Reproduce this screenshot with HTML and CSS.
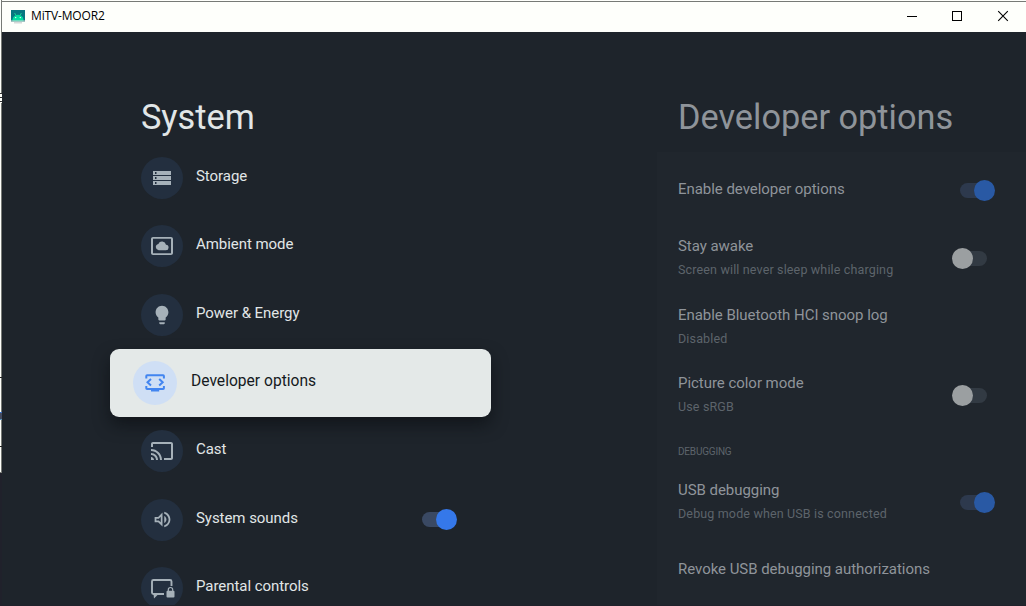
FILE: index.html
```html
<!DOCTYPE html>
<html lang="en">
  <head>
    <meta charset="UTF-8" />
    <meta name="viewport" content="width=device-width, initial-scale=1.0" />
    <title>MiTV-MOOR2</title>
    <link rel="stylesheet" href="styles.css">
  </head>
  <body>
    <div class="edge">
      <span class="edge-mark menu"></span>
      <span class="edge-mark line-a"></span>
      <span class="edge-mark dot"></span>
      <span class="edge-mark line-b"></span>
    </div>
    <div class="window">
      <header class="titlebar">
        <svg class="app-icon" width="14" height="14" viewBox="0 0 14 14">
          <rect x="0" y="0" width="14" height="12" fill="#087681"/>
          <path d="M3.600 3 5 5.500M10.400 3 9 5.500" stroke="#20d894" stroke-width=".9"/>
          <path d="M1.500 11.500V9.500C2.500 3.300 11.500 3.300 12.500 9.500v2z" fill="#04dca0"/>
          <circle cx="4.700" cy="7.600" r=".7" fill="#fff"/>
          <circle cx="9.300" cy="7.600" r=".7" fill="#fff"/>
          <path d="M0 10.500h14v1.200H0zM3 12h8v1.600H3z" fill="#d6d8d8"/>
        </svg>
        <span class="app-name">MiTV-MOOR2</span>
        <div class="window-buttons">
          <svg width="46" height="30" viewBox="0 0 46 30"><path d="M18 14.5h10" stroke="#000"/></svg>
          <svg width="46" height="30" viewBox="0 0 46 30"><rect x="17.5" y="9.5" width="9" height="9" fill="none" stroke="#000"/></svg>
          <svg width="46" height="30" viewBox="0 0 46 30"><path d="M17.2 9.2l9.6 9.6M26.8 9.2l-9.6 9.6" stroke="#000" stroke-width="1.1"/></svg>
        </div>
      </header>

      <main class="screen">
        <section class="system">
          <h1>System</h1>
          <ul class="menu-list">
            <li class="item">
              <span class="icon">
                <svg width="24" height="24" viewBox="0 0 24 24"><path fill-rule="evenodd" d="M3 19h18v-4H3v4zm2-3h1.500v2H5v-2zM3 5v4h18V5H3zm3.500 3H5V6h1.500v2zM3 14h18v-4H3v4zm2-3h1.500v2H5v-2z"/></svg>
              </span>
              <span class="label">Storage</span>
            </li>
            <li class="item">
              <span class="icon">
                <svg width="24" height="24" viewBox="0 0 24 24"><path d="M21 3H3c-1.100 0-2 .9-2 2v14c0 1.100.9 2 2 2h18c1.100 0 2-.9 2-2V5c0-1.100-.9-2-2-2zm0 16.200H3V4.800h18v14.400zM8.700 16.200h7a2.700 2.700 0 0 0 .3-5.400A4.100 4.100 0 0 0 8.300 9.900 3.200 3.200 0 0 0 8.700 16.200z"/></svg>
              </span>
              <span class="label">Ambient mode</span>
            </li>
            <li class="item">
              <span class="icon">
                <svg width="22" height="22" viewBox="0 0 24 24"><path d="M9 21c0 .55.45 1 1 1h4c.55 0 1-.45 1-1v-1H9v1zm3-19C8.140 2 5 5.140 5 9c0 2.380 1.190 4.470 3 5.740V17c0 .55.45 1 1 1h6c.55 0 1-.45 1-1v-2.260c1.810-1.270 3-3.360 3-5.740 0-3.860-3.140-7-7-7z"/></svg>
              </span>
              <span class="label">Power &amp; Energy</span>
            </li>
            <li class="item selected">
              <span class="icon">
                <svg width="24" height="24" viewBox="0 0 24 24" fill="none" stroke="currentColor" stroke-width="2">
                  <path d="M3.300 7.500V5q0-.8.8-.8h16q.8 0 .8.800v2.500M3.300 15v2.200q0 .8.800.8h16q.8 0 .8-.8V15M8 8 4.500 11.300 8 14.600M16.200 8l3.500 3.300-3.500 3.300M8 19.400h8.200"/>
                </svg>
              </span>
              <span class="label">Developer options</span>
            </li>
            <li class="item">
              <span class="icon">
                <svg width="24" height="24" viewBox="0 0 24 24"><path d="M21 3H3c-1.100 0-2 .9-2 2v3h2V5h18v14h-7v2h7c1.100 0 2-.9 2-2V5c0-1.100-.9-2-2-2zM1 18v3h3c0-1.660-1.340-3-3-3zm0-4v2c2.760 0 5 2.240 5 5h2c0-3.870-3.130-7-7-7zm0-4v2c4.970 0 9 4.030 9 9h2c0-6.080-4.930-11-11-11z"/></svg>
              </span>
              <span class="label">Cast</span>
            </li>
            <li class="item">
              <span class="icon">
                <svg width="21" height="21" viewBox="0 0 24 24"><path d="M3 9v6h4l5 5V4L7 9H3zm7-.17v6.340L7.830 13H5v-2h2.830L10 8.830zM16.500 12c0-1.770-1.020-3.290-2.500-4.030v8.050c1.480-.73 2.500-2.250 2.500-4.020zM14 3.230v2.060c2.890.86 5 3.540 5 6.710s-2.110 5.850-5 6.710v2.060c4.010-.91 7-4.490 7-8.770s-2.990-7.860-7-8.770z"/></svg>
              </span>
              <span class="label">System sounds</span>
              <span class="switch on"></span>
            </li>
            <li class="item">
              <span class="icon">
                <svg width="26" height="24" viewBox="0 0 26 24">
                  <path d="M22.500 10V5.500q0-1.500-1.500-1.500H4.500Q3 4 3 5.500v11q0 1.500 1.500 1.500H15" fill="none" stroke="currentColor" stroke-width="1.900"/>
                  <path d="M4.500 18h5L5 22.500z"/>
                  <path d="M19.300 15v-1.300a2.200 2.200 0 0 1 4.400 0V15" fill="none" stroke="currentColor" stroke-width="1.200"/>
                  <rect x="17.500" y="14.700" width="8" height="6.800" rx="1"/>
                </svg>
              </span>
              <span class="label">Parental controls</span>
            </li>
          </ul>
        </section>

        <section class="developer">
          <h1>Developer options</h1>
          <ul class="option-list">
            <li class="option">
              <div class="text"><p class="title">Enable developer options</p></div>
              <span class="switch on"></span>
            </li>
            <li class="option">
              <div class="text">
                <p class="title">Stay awake</p>
                <p class="summary">Screen will never sleep while charging</p>
              </div>
              <span class="switch"></span>
            </li>
            <li class="option">
              <div class="text">
                <p class="title">Enable Bluetooth HCI snoop log</p>
                <p class="summary">Disabled</p>
              </div>
            </li>
            <li class="option">
              <div class="text">
                <p class="title">Picture color mode</p>
                <p class="summary">Use sRGB</p>
              </div>
              <span class="switch"></span>
            </li>
            <li class="category">DEBUGGING</li>
            <li class="option">
              <div class="text">
                <p class="title">USB debugging</p>
                <p class="summary">Debug mode when USB is connected</p>
              </div>
              <span class="switch on"></span>
            </li>
            <li class="option">
              <div class="text"><p class="title">Revoke USB debugging authorizations</p></div>
            </li>
          </ul>
        </section>
      </main>
    </div>
  </body>
</html>
```
FILE: styles.css
```css
:root {
  --screen: #1e242b;
  --panel: #20262d;
  --text: #e1e6e7;
  --text-dim: #8f949a;
  --text-faint: #5d646b;
  --icon: #a6b1b9;
  --icon-bg: #232f3f;
  --accent: #3578ea;
}

* {
  margin: 0;
  padding: 0;
  box-sizing: border-box;
}

body {
  display: flex;
  height: 606px;
  overflow: hidden;
  background: #20212b;
  font-family: Roboto, sans-serif;
}

ul {
  list-style: none;
}

/* sliver of the desktop left of the window */
.edge {
  position: relative;
  width: 2px;
  height: 473px;
  background: #fefffb;
  border-right: 1px solid #777a76;
  border-bottom: 1px solid #777a76;
}

.edge-mark {
  position: absolute;
  left: 0;
  width: 2px;
  height: 1px;
  background: #222;
}

.menu {
  top: 93px;
  height: 10px;
  background: repeating-linear-gradient(#333 0 1px, #fefffb 1px 4px);
}

.line-a {
  top: 377px;
}

.dot {
  top: 412px;
  height: 8px;
  background: #444b60;
  border-top: 1px solid #3970c5;
  border-bottom: 1px solid #5b94b8;
}

.line-b {
  top: 446px;
}

.window {
  width: 1024px;
  height: 605px;
  display: flex;
  flex-direction: column;
}

.titlebar {
  height: 32px;
  flex: none;
  display: flex;
  align-items: center;
  background: linear-gradient(#fefffb 1px, #777a76 1px 2px, #fefffb 2px);
  padding: 1px 0 0 9px;
}

.app-name {
  margin-left: 6px;
  padding-bottom: 2px;
  font: 12px "Open Sans", sans-serif;
  letter-spacing: -0.15px;
  color: #000;
}

.window-buttons {
  display: flex;
  margin: 0 -1px 0 auto;
}

.window-buttons svg {
  display: block;
}

.screen {
  flex: 1;
  display: flex;
  min-height: 0;
  overflow: hidden;
  background: var(--screen);
}

.system {
  width: 655px;
  flex: none;
  padding: 64px 0 0 108px;
}

h1 {
  height: 48px;
  line-height: 42px;
  font-size: 34.3px;
  font-weight: 400;
}

.system h1 {
  padding-left: 31px;
  color: var(--text);
}

.item {
  width: 381px;
  height: 68.3px;
  padding: 0 42px 0 31px;
  display: flex;
  align-items: center;
  color: var(--text);
  border-radius: 9px;
}

.icon {
  width: 42px;
  height: 42px;
  margin-right: 13px;
  display: flex;
  align-items: center;
  justify-content: center;
  flex: none;
  border-radius: 50%;
  background: var(--icon-bg);
  color: var(--icon);
}

.icon svg {
  fill: currentColor;
}

.label {
  font-size: 15px;
  line-height: 20px;
  letter-spacing: -0.05px;
  padding-bottom: 4px;
}

.item.selected {
  height: 67.3px;
  margin: 0.5px 0;
  padding-left: 23px;
  background: #e4e9e8;
  color: #15191d;
  box-shadow: 0 8px 16px rgba(10, 13, 16, 0.6);
}

.selected .icon {
  width: 44px;
  height: 44px;
  margin-right: 14px;
  background: #cfdff5;
  color: #4285f0;
}

.selected .icon svg {
  fill: none;
}

.selected .label {
  font-size: 15.6px;
  letter-spacing: 0;
  padding-bottom: 5px;
}

.switch {
  position: relative;
  width: 27px;
  height: 15px;
  margin-left: auto;
  flex: none;
  border-radius: 8px;
  background: #323a43;
}

.switch::after {
  content: "";
  position: absolute;
  top: -3px;
  left: -8px;
  width: 21px;
  height: 21px;
  border-radius: 50%;
  background: #9b9fa1;
}

.switch.on::after {
  left: auto;
  right: -8px;
  background: #2959a4;
}

.switch.on {
  background: #2d394d;
}

.system .switch.on {
  background: #3a4963;
}

.system .switch.on::after {
  background: var(--accent);
}

.developer {
  flex: 1;
  background: var(--panel);
}

.developer h1 {
  height: 120px;
  padding: 64px 0 0 21px;
  color: var(--text-dim);
  background: var(--screen);
  white-space: nowrap;
}

.option-list {
  padding: 4px 39px 0 21px;
}

.option {
  height: 68.3px;
  display: flex;
  align-items: center;
}

.text {
  padding-bottom: 3px;
  white-space: nowrap;
}

.title {
  font-size: 15px;
  line-height: 20px;
  letter-spacing: -0.04px;
  color: var(--text-dim);
}

.summary {
  margin-top: 5px;
  margin-bottom: -2px;
  font-size: 12.5px;
  line-height: 18px;
  letter-spacing: 0.15px;
  color: var(--text-faint);
}

.category {
  height: 39px;
  padding-top: 16px;
  font-size: 10px;
  line-height: 14px;
  letter-spacing: -0.2px;
  color: var(--text-faint);
}
```
